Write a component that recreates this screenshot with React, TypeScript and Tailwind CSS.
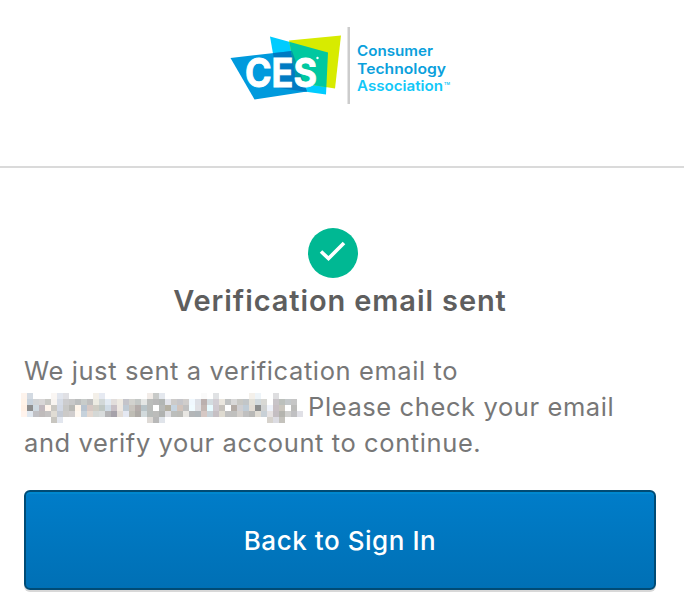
// Redacted address, one string per mosaic row, "-" is an empty cell
const mosaicRows = [
  'fdf3ec d3dae2 - - - faf6f3 e2e6ee e0e0e4 - - - - f3efe8 e6eaf2 - - - - - - - f2ece8 c8cac8 e4e8ee - - - - - - fafafa - e0e2e4 - - - - - f4f0ea eef4f8 - - dedee0 - - - -',
  'fff3e8 c8d2dc d2d4d6 d8d6d6 c8c8c4 f8f4f0 d6dce6 ccccce c8c8c8 bcbebe c8ccca bfbfbf ecebe2 d2d8d8 e2eaf2 e2dedc eeeae2 c4c4ca d2d2ce c4c8c6 e4e6e4 bbbdbb b8b8b8 b2b6b4 e2e4ea cdcbc9 c6c6ca d0cdcb f0f8fe dde0e6 bbb0ae d4dce0 d2ced4 eae6de c0c2c2 d8d8d8 c8c8c4 c2c6c8 e2e0d8 d2dade d8d8d4 - c8c4c8 bcc0bc c4c8ca c6c6c6 -',
  'fff0e4 8e8e8e cfd9e0 c0b8bd fff5ec cac8c2 d2d8e4 c8c8c6 b8b8b4 fff5ea b8c4d0 d6c8c4 cfcdc4 c0c8c4 d0dce6 c8c0c6 eee8e2 bfcad4 c8c4be b4acaa b8c4c8 babcba - b8bab8 b4b0a2 c6d4e0 d2c4bc c0c0c0 f0fbff e0e0e4 c4b8b4 e8fbff d0cad0 c6c2bc - b4aca6 cfcfd2 c0ccd6 e2dcd4 8c8e8e d0d2d2 eef2fa c8c0c4 cac6be - bcbcba -',
  'fff3ec e0e8f0 c0c0c4 bfbbbb c4c2c2 e0dcd4 c4cad4 cccac8 d0cdcd fff8f0 c6d2dc e4d8d0 d4d8d6 d8dcdc b4b4b6 a6a2aa e2dcd6 e4e8f2 bfbdb5 aeaaa6 d2dadc b8bcba bcbcba b0b2b0 dedee2 bcbebc bcbcb8 e8e6e2 b4b6b8 b0b6ba d6c8c4 c8d2d8 c6c0c4 dedad0 c0c0c0 c0c0be d4d0cc c0c0c0 b8b8b6 e0dcd4 c8d0d6 e6e2e2 c4bec2 b4b4ae d0d0ce c0c0c2 e0e0e6',
  '- - - - - c8c6c0 e2e6ee - - - - - - - - - - - - - - dedad6 b8b8b8 e0e4ea - - - - - - - - - - - - - - - - - d6d2cc dcdce2 c4c2bc - - -',
].map((row) => row.split(' '))

function Logo() {
  return (
    <svg width="224" height="80" viewBox="0 0 224 80" aria-label="CES Consumer Technology Association">
      <defs>
        <clipPath id="cyanShape">
          <polygon points="42,11.5 100,27.5 98,69.5 51,63" />
        </clipPath>
        <clipPath id="blueShape">
          <polygon points="2.5,33 64,26 79,66.5 26.5,74.5" />
        </clipPath>
      </defs>
      <polygon points="42,11.5 100,27.5 98,69.5 51,63" fill="#00ccff" />
      <polygon points="61,15.5 113,10.5 107,63.5 69,57.5" fill="#d7eb00" />
      <polygon points="2.5,33 64,26 79,66.5 26.5,74.5" fill="#009add" />
      <g clipPath="url(#cyanShape)">
        <polygon points="2.5,33 64,26 79,66.5 26.5,74.5" fill="#007ac2" />
        <polygon points="61,15.5 113,10.5 107,63.5 69,57.5" fill="#00c8a0" />
        <g clipPath="url(#blueShape)">
          <polygon points="61,15.5 113,10.5 107,63.5 69,57.5" fill="#0095a8" />
        </g>
      </g>
      <text
        x="17"
        y="62"
        textLength="72"
        lengthAdjust="spacingAndGlyphs"
        fill="#fff"
        stroke="#fff"
        strokeWidth="0.9"
        className="font-[Inter,'Liberation_Sans',sans-serif] text-[39px] font-bold"
      >
        CES
      </text>
      <circle cx="89.5" cy="33" r="1.2" fill="#fff" />
      <rect x="119.5" y="2" width="2.5" height="77" fill="#cccccc" />
      <g fill="#0aa0dc" className="font-[Inter,'Liberation_Sans',sans-serif] text-[14.3px] font-semibold">
        <text x="129" y="31.3" textLength="76" lengthAdjust="spacingAndGlyphs">Consumer</text>
        <text x="129" y="48.8" textLength="89" lengthAdjust="spacingAndGlyphs">Technology</text>
        <text x="129" y="66.3" textLength="86" lengthAdjust="spacingAndGlyphs" fill="#12c8f8">Association</text>
        <text x="216" y="60" textLength="6" lengthAdjust="spacingAndGlyphs" fill="#12c8f8" className="text-[4px]">TM</text>
      </g>
    </svg>
  )
}

function RedactedEmail() {
  return (
    <svg width="282" height="30" viewBox="0 0 282 30" shapeRendering="crispEdges" className="-ml-[3px] mt-1 shrink-0">
      {mosaicRows.map((row, y) =>
        row.map((color, x) =>
          color === '-' ? null : (
            <rect key={`${x}-${y}`} x={x * 6} y={y * 6} width="6" height="6" fill={`#${color}`} />
          )
        )
      )}
    </svg>
  )
}

export default function App() {
  return (
    <div className="h-[614px] w-[684px] overflow-hidden bg-white font-[Inter,'Liberation_Sans',sans-serif]">
      {/* Header */}
      <header className="flex h-[168px] justify-center border-b-2 border-[#dadada] pt-[25px] pr-[4px]">
        <Logo />
      </header>

      <main className="flex flex-col px-6 pt-[60px]">
        {/* Title */}
        <div className="flex w-[632px] flex-col items-center">
          <svg width="50" height="50" viewBox="0 0 50 50" className="mr-[14px]">
            <circle cx="25" cy="25" r="25" fill="#00b893" />
            <path d="M13 23.5 L20.5 30.5 L36 15" fill="none" stroke="#fff" strokeWidth="3.6" />
          </svg>
          <h1 className="mt-[5px] text-[29px] leading-[36px] font-semibold tracking-[0.9px] whitespace-nowrap text-[#5e5e5e]">
            Verification email sent
          </h1>
        </div>

        {/* Message */}
        <div className="mt-[34px] text-[25.5px] leading-[36px] tracking-[0.6px] whitespace-nowrap text-[#777777]">
          <p>We just sent a verification email to</p>
          <div className="flex h-9">
            <RedactedEmail />
            <p className="ml-[5px]">Please check your email</p>
          </div>
          <p>and verify your account to continue.</p>
        </div>

        <button className="mt-[29px] h-[100px] w-[632px] rounded-[6px] border-2 border-[#004b75] bg-linear-to-b from-[#007dc9] to-[#0070b5] pt-px text-[26px] font-medium tracking-[0.55px] text-white shadow-[0_2px_0_#d8d8d8,inset_0_2px_0_#0088cf]">
          Back to Sign In
        </button>
      </main>
    </div>
  )
}
